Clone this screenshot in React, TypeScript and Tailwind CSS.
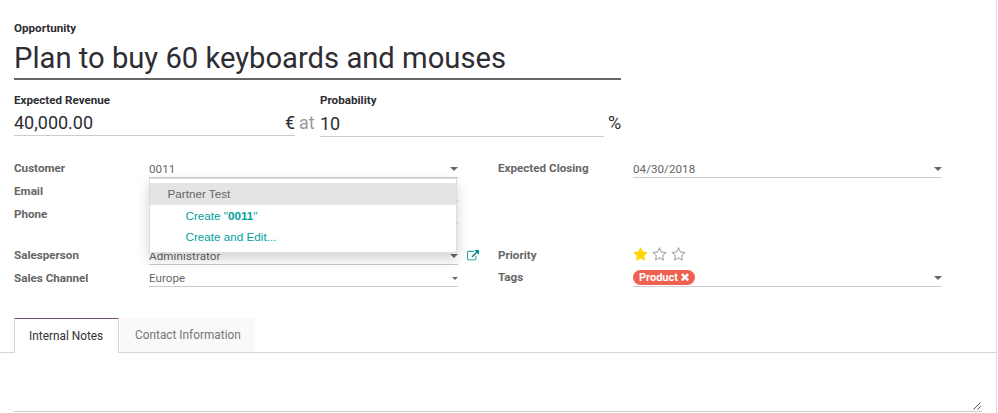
import type { ReactNode } from "react";

const STAR =
  "M1664 647q0 22-26 48l-363 354 86 500q1 7 1 20 0 21-10.5 35.5t-30.5 14.5q-19 0-40-12l-449-236-449 236q-22 12-40 12-21 0-31.5-14.5t-10.5-35.5q0-6 2-20l86-500-364-354q-25-27-25-48 0-37 56-46l502-73 225-455q19-41 49-41t49 41l225 455 502 73q56 9 56 46z";
const STAR_OUTLINE =
  "M1137 1004l306-297-422-62-189-382-189 382-422 62 306 297-73 421 378-199 377 199zm527-357q0 22-26 48l-363 354 86 500q1 7 1 20 0 50-41 50-19 0-40-12l-449-236-449 236q-22 12-40 12-21 0-31.5-14.5t-10.5-35.5q0-6 2-20l86-500-364-354q-25-27-25-48 0-37 56-46l502-73 225-455q19-41 49-41t49 41l225 455 502 73q56 9 56 46z";
const TIMES =
  "M1490 1322q0 40-28 68l-136 136q-28 28-68 28t-68-28l-294-294-294 294q-28 28-68 28t-68-28l-136-136q-28-28-28-68t28-68l294-294-294-294q-28-28-28-68t28-68l136-136q28-28 68-28t68 28l294 294 294-294q28-28 68-28t68 28l136 136q28 28 28 68t-28 68l-294 294 294 294q28 28 28 68z";
const EXTERNAL =
  "M1408 928v320q0 119-84.5 203.5t-203.5 84.5h-832q-119 0-203.5-84.5t-84.5-203.5v-832q0-119 84.5-203.5t203.5-84.5h704q14 0 23 9t9 23v64q0 14-9 23t-23 9h-704q-66 0-113 47t-47 113v832q0 66 47 113t113 47h832q66 0 113-47t47-113v-320q0-14 9-23t23-9h64q14 0 23 9t9 23zm384-864v512q0 26-19 45t-45 19-45-19l-176-176-652 652q-10 10-23 10t-23-10l-114-114q-10-10-10-23t10-23l652-652-176-176q-19-19-19-45t19-45 45-19h512q26 0 45 19t19 45z";

function Caret({ small = false }: { small?: boolean }) {
  return small ? (
    <span className="mt-[2px] ml-auto h-0 w-0 border-x-[3.5px] border-t-[3px] border-x-transparent border-t-[#666]" />
  ) : (
    <span className="mt-px ml-auto h-0 w-0 border-x-4 border-t-4 border-x-transparent border-t-[#666]" />
  );
}

function Row({ label, className, children }: { label: string; className: string; children?: ReactNode }) {
  return (
    <div className={`flex ${className}`}>
      <div className="w-[135px] shrink-0 text-[11.65px] leading-[18px] font-bold text-[#666]">{label}</div>
      {children}
    </div>
  );
}

function Field({ className = "h-[19px]", children }: { className?: string; children?: ReactNode }) {
  return (
    <div className={`flex w-[309px] items-center border-b border-[#ccc] text-[11.6px] text-[#666] ${className}`}>
      {children}
    </div>
  );
}

export default function App() {
  return (
    <div className="h-[413px] w-[997px] overflow-hidden border-r border-[#d9d9d9] bg-white font-['Roboto',sans-serif] text-[#2d2d33]">
      <div className="h-[318px] pt-[20px] pl-[14px]">
        <div className="h-[16px] text-[11.65px] leading-[17px] font-bold">Opportunity</div>
        <div className="h-[44px] w-[607px] border-b-2 border-[#666] text-[29.2px] leading-[44px]">
          Plan to buy 60 keyboards and mouses
        </div>
        <div className="flex pt-[12px]">
          <div className="w-[281px]">
            <div className="h-[16px] text-[11.65px] leading-[17px] font-bold">Expected Revenue</div>
            <div className="flex h-[28px] justify-between border-b border-[#ccc] text-[18px] leading-[30px]">
              <span>40,000.00</span>
              <span>€</span>
            </div>
          </div>
          <div className="w-[25px] pt-[16px] pl-[4px] text-[18px] leading-[30px] text-[#999]">at</div>
          <div className="w-[284px]">
            <div className="h-[16px] text-[11.65px] leading-[17px] font-bold">Probability</div>
            <div className="h-[29px] border-b border-[#ccc] text-[18px] leading-[32px]">10</div>
          </div>
          <div className="pt-[16px] pl-[4px] text-[18px] leading-[30px]">%</div>
        </div>

        <div className="flex pt-[21px]">
          <div className="w-[484px]">
            <Row label="Customer" className="h-[23px]">
              <div className="relative">
                <Field>
                  <span className="pt-[4px] tracking-[0.05px]">0011</span>
                  <Caret />
                </Field>
                <div className="absolute top-[19px] left-0 z-10 h-[75px] w-[308px] border border-[#ddd] bg-white pt-[4px] font-['Liberation_Sans',Arial,sans-serif] text-[11.7px] shadow-[0_6px_12px_rgba(0,0,0,0.175)]">
                  <div className="h-[22px] bg-[#e4e4e4] pl-[17.5px] leading-[22px] text-[#666]">Partner Test</div>
                  <div className="h-[21px] pl-[35.5px] leading-[21px] text-[#00a09d]">
                    Create "<b>0011</b>"
                  </div>
                  <div className="h-[21px] pl-[35.5px] leading-[21px] text-[#00a09d]">Create and Edit...</div>
                </div>
              </div>
            </Row>
            <Row label="Email" className="h-[23px]">
              <Field />
            </Row>
            <Row label="Phone" className="h-[41px]">
              <Field />
            </Row>
            <Row label="Salesperson" className="h-[23px]">
              <Field>
                <span className="pt-[4px] tracking-[0.1px]">Administrator</span>
                <Caret />
              </Field>
              <svg viewBox="0 0 1792 1792" className="mt-[4px] ml-[9px] h-[12px] w-[12px] fill-[#008f8c]">
                <path d={EXTERNAL} />
              </svg>
            </Row>
            <Row label="Sales Channel" className="h-[23px]">
              <Field className="h-[18px]">
                <span className="pt-[3px] tracking-[0.05px]">Europe</span>
                <Caret small />
              </Field>
            </Row>
          </div>
          <div>
            <Row label="Expected Closing" className="h-[87px]">
              <Field>
                <span className="pt-[4px] tracking-[0.05px]">04/30/2018</span>
                <Caret />
              </Field>
            </Row>
            <Row label="Priority" className="h-[22px]">
              <div className="flex gap-[4px] pt-px">
                <svg viewBox="0 0 1664 1792" className="h-[15px] w-[15px] fill-[#ffd700]">
                  <path d={STAR} />
                </svg>
                <svg viewBox="0 0 1664 1792" className="h-[15px] w-[15px] fill-[#a8a8a8]">
                  <path d={STAR_OUTLINE} />
                </svg>
                <svg viewBox="0 0 1664 1792" className="h-[15px] w-[15px] fill-[#a8a8a8]">
                  <path d={STAR_OUTLINE} />
                </svg>
              </div>
            </Row>
            <Row label="Tags" className="h-[22px]">
              <Field>
                <span className="flex h-[15px] items-center rounded-full bg-[#f06050] px-[6px] text-[11px] font-bold text-white">
                  <span className="pt-[2px]">Product</span>
                  <svg viewBox="302 302 1188 1252" className="ml-[3px] h-[8px] w-[8px] fill-white">
                    <path d={TIMES} />
                  </svg>
                </span>
                <Caret />
              </Field>
            </Row>
          </div>
        </div>
      </div>

      <div className="flex h-[35px] border-b border-[#d5d5d5] pl-[14px] text-[11.85px]">
        <div className="h-[35px] w-[105px] border-x border-t border-x-[#d5d5d5] border-t-[#7c4f72] bg-white pl-[14px] leading-[35px] text-[#333]">
          Internal Notes
        </div>
        <div className="ml-px h-[34px] w-[135px] bg-[#f9f9f9] pl-[15px] leading-[34px] text-[#777]">
          Contact Information
        </div>
      </div>
      <div className="mr-[14px] ml-[14px] flex h-[59px] items-end justify-end border-b border-[#ccc]">
        <svg viewBox="0 0 8 8" className="mr-px mb-px h-[8px] w-[8px] fill-none stroke-[#555]" strokeWidth="1">
          <path d="M0.5 7.5L7.5 0.5M4.5 7.5L7.5 4.5" />
        </svg>
      </div>
    </div>
  );
}
